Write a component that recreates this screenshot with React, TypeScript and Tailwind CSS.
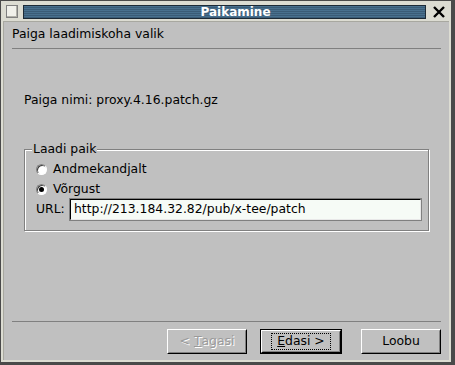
const font = { fontFamily: '"DejaVu Sans", Verdana, sans-serif' };

const Radio = ({ checked, label }: { checked?: boolean; label: string }) => (
  <div className="flex h-[20px] items-center">
    <span className="ml-[11px] flex h-[11px] w-[11px] items-center justify-center rounded-full border border-t-[#808080] border-l-[#808080] border-b-white border-r-white bg-white shadow-[inset_1px_1px_0_#404040]">
      {checked && <span className="h-[5px] w-[5px] rounded-full bg-black" />}
    </span>
    <span className="ml-[6px]">{label}</span>
  </div>
);

const Button = ({
  children,
  disabled,
  focused,
}: {
  children: React.ReactNode;
  disabled?: boolean;
  focused?: boolean;
}) => (
  <div
    className={
      "h-[25px] " + (focused ? "w-[82px] border border-black" : "w-[80px]")
    }
  >
    <div className="flex h-full w-full items-center justify-center border border-t-white border-l-white border-b-black border-r-black">
      <div className="flex h-full w-full items-center justify-center border border-transparent border-b-[#808080] border-r-[#808080]">
        <span
          className={
            "flex h-[17px] items-center whitespace-pre px-[5px] " +
            (focused ? "border border-dotted border-black" : "") +
            (disabled ? " text-[#9a9a9a] [text-shadow:1px_1px_0_#ffffff]" : "")
          }
        >
          {children}
        </span>
      </div>
    </div>
  </div>
);

const App = () => {
  return (
    <div
      className="h-[365px] w-[455px] overflow-hidden bg-[#4a4a4a] p-[1px] text-[12.4px] text-black"
      style={font}
    >
      <div className="flex h-[361px] w-[450px] flex-col border-2 border-[#dcdcd2] bg-[#c0c0c0]">
        <div className="flex h-[18px] shrink-0 items-center gap-[5px] bg-[#dcdcd2] pb-[1px] pl-[3px] pr-[2px]">
          <div className="h-[13px] w-[12px] border border-[#808080] bg-[#f0f0ea] shadow-[inset_-1px_-1px_0_#b0b0a8]" />
          <div className="flex h-[14px] flex-1 items-center justify-center border border-[#1c2a36] bg-[repeating-linear-gradient(180deg,#48708e_0px,#48708e_1px,#3a5c77_1px,#3a5c77_2px)] pl-[22px] text-[12px] font-bold text-white">
            Paikamine
          </div>
          <div className="flex h-[15px] w-[16px] items-center justify-center">
            <svg width="12" height="12" viewBox="0 0 12 12">
              <path d="M1 1 L11 11 M11 1 L1 11" stroke="#000" strokeWidth="2.4" />
            </svg>
          </div>
        </div>
        <div className="flex flex-1 flex-col border-l border-t border-[#a8a8a0] px-[8px]">
          <div className="pt-[4px] leading-[16px]">Paiga laadimiskoha valik</div>
          <div className="mt-[6px] h-[2px] border-t border-[#808080] border-b-white" />

          <div className="mt-[42px] pl-[12px] leading-[16px]">
            Paiga nimi: proxy.4.16.patch.gz
          </div>

          <div className="relative mx-[12px] mt-[41px] h-[82px] border border-[#808080] shadow-[inset_1px_1px_0_#ffffff,1px_1px_0_#ffffff]">
            <span className="absolute left-[7px] top-[-9px] bg-[#c0c0c0] px-[1px] leading-[16px]">
              Laadi paik
            </span>
            <div className="pt-[9px]">
              <Radio label="Andmekandjalt" />
              <Radio label="Võrgust" checked />
              <div className="flex items-center pl-[11px]">
                <span className="w-[34px]">URL:</span>
                <div className="flex h-[21px] w-[351px] items-center border border-t-black border-l-black border-b-[#e8e8e8] border-r-[#e8e8e8] bg-[#f6fbf6] pl-[3px] shadow-[0_0_0_1px_#808080]">
                  http://213.184.32.82/pub/x-tee/patch
                </div>
              </div>
            </div>
          </div>

          <div className="flex-1" />
          <div className="h-[2px] border-t border-[#808080] border-b-white" />
          <div className="mb-[6px] mt-[6px] flex justify-end">
            <Button disabled>
              {"< "}
              <span className="underline">T</span>agasi
            </Button>
            <div className="ml-[13px] mr-[19px]">
              <Button focused>
                <span className="underline">E</span>
                {"dasi >"}
              </Button>
            </div>
            <Button>Loobu</Button>
          </div>
        </div>
      </div>
    </div>
  );
};

export default App;
